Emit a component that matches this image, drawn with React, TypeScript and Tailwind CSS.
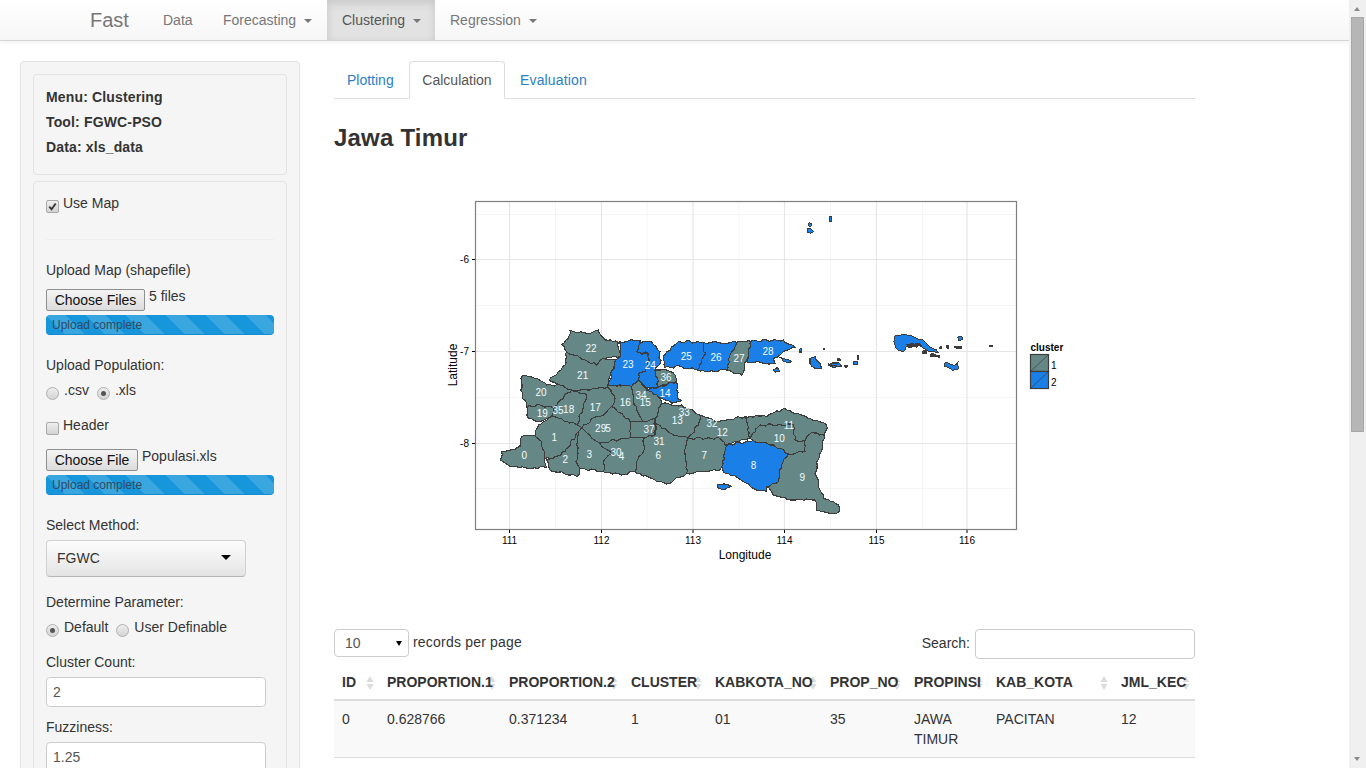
const TEAL = "#658886";
const BLUE = "#1a80e8";
const OUTLINE = "#3c3c3c";

// regions traced from the plot, coordinates are 3x px relative to (490, 310)
const regions: { fill: string; d: string }[] = [
  { fill: TEAL, d: "240,60 262,68 290,70 325,60 345,90 385,97 390,140 340,145 320,165 285,150 230,125 215,103 235,85" },
  { fill: TEAL, d: "230,125 285,150 320,165 340,145 378,150 355,220 352,232 300,240 245,240 210,225 178,210 205,185 225,165" },
  { fill: TEAL, d: "97,198 135,205 170,225 210,225 245,240 205,275 190,295 150,285 110,290 92,240" },
  { fill: TEAL, d: "110,290 150,285 190,295 185,320 150,335 115,325" },
  { fill: TEAL, d: "190,295 205,275 245,240 290,255 280,290 262,345 185,320" },
  { fill: TEAL, d: "245,240 300,240 352,232 375,265 365,290 340,315 320,320 275,352 262,345 280,290 290,255" },
  { fill: TEAL, d: "352,228 425,225 430,265 440,300 458,335 420,335 395,310 365,290 375,265" },
  { fill: TEAL, d: "425,230 445,210 470,240 505,260 515,280 495,325 458,335 440,300 430,265" },
  { fill: TEAL, d: "515,280 545,285 575,285 630,315 625,345 595,385 550,375 495,340 495,325" },
  { fill: TEAL, d: "630,315 680,335 710,330 765,320 780,385 705,405 690,385 595,385 625,345" },
  { fill: TEAL, d: "765,320 830,320 885,295 915,310 1010,345 1005,378 965,368 945,392 915,390 910,345 810,345 780,385" },
  { fill: TEAL, d: "810,345 910,345 915,390 945,392 945,425 895,432 850,405 790,392 780,385" },
  { fill: TEAL, d: "965,368 1005,378 990,430 975,490 985,520 1000,565 1045,585 1048,605 1020,612 980,600 975,570 900,570 850,555 830,530 865,515 875,465 895,432 945,425 945,392" },
  { fill: BLUE, d: "790,392 850,405 895,432 875,465 865,515 830,530 830,545 790,535 745,505 700,485 695,470 712,405" },
  { fill: TEAL, d: "595,385 690,385 705,405 712,405 695,470 690,480 640,485 590,490 585,430" },
  { fill: TEAL, d: "495,340 550,375 595,385 585,430 590,490 530,522 500,515 435,485 440,455 460,425 462,385 495,375" },
  { fill: TEAL, d: "420,335 458,335 495,325 495,375 462,385 420,382" },
  { fill: TEAL, d: "340,315 365,290 395,310 420,335 420,382 330,400 305,385 275,352 320,320" },
  { fill: TEAL, d: "330,400 420,382 462,385 460,425 440,455 435,485 395,495 340,485 342,450 365,432" },
  { fill: TEAL, d: "265,365 275,352 305,385 330,400 365,432 342,450 340,485 270,475 258,455 262,438" },
  { fill: TEAL, d: "265,365 262,438 258,455 270,475 262,500 240,495 180,480 170,450 190,445 225,425" },
  { fill: TEAL, d: "145,345 185,320 262,345 275,352 265,365 225,425 190,445 165,445 155,395 135,378" },
  { fill: TEAL, d: "95,380 135,378 155,395 165,445 170,472 115,475 60,470 32,450 35,425 75,420 90,410" },
  { fill: BLUE, d: "388,95 450,90 450,105 440,125 475,135 478,150 465,185 445,190 445,210 425,230 355,225 378,150 390,140" },
  { fill: BLUE, d: "450,100 485,95 510,125 510,160 495,180 505,230 470,235 445,210 445,190 465,185 478,150 475,130 440,125" },
  { fill: TEAL, d: "495,180 530,180 555,195 560,215 505,230" },
  { fill: BLUE, d: "470,240 505,232 560,215 562,265 575,272 545,280 505,260" },
  { fill: BLUE, d: "565,95 640,97 640,125 648,130 622,180 575,170 525,172 520,140" },
  { fill: BLUE, d: "640,97 740,97 725,125 710,180 655,185 622,180 648,130 640,125" },
  { fill: TEAL, d: "740,97 785,95 775,135 755,195 710,180 725,125" },
  { fill: BLUE, d: "785,93 880,90 915,113 875,130 850,145 855,160 770,155 775,135" },
  { fill: BLUE, d: "682,525 705,522 725,530 705,538 685,535" },
  { fill: BLUE, d: "960,145 975,140 990,160 995,175 975,175 960,160" },
  { fill: BLUE, d: "870,142 885,147 905,155 880,155" },
  { fill: BLUE, d: "1015,165 1040,158 1055,168 1035,172" },
  { fill: BLUE, d: "928,118 935,115 936,126 928,126" },
  { fill: BLUE, d: "850,180 862,172 870,185 855,186" },
];

// specks and islands on the right, 3x px relative to (780, 200)
const islands: { fill: string; d: string }[] = [
  { fill: BLUE, d: "148,50 155,50 155,64 148,64" },
  { fill: BLUE, d: "86,68 93,70 94,79 86,78" },
  { fill: BLUE, d: "82,86 92,85 101,94 92,100 82,96" },
  { fill: BLUE, d: "345,408 365,405 400,410 430,420 445,435 470,450 475,458 440,450 415,435 395,430 378,440 370,455 355,450 345,435 342,425" },
  { fill: OUTLINE, d: "380,432 420,432 425,438 385,442" },
  { fill: BLUE, d: "533,410 545,408 549,418 537,423" },
  { fill: BLUE, d: "492,490 510,492 528,495 536,482 535,508 518,512 495,500" },
  { fill: OUTLINE, d: "452,462 478,466 480,473 452,470" },
  { fill: OUTLINE, d: "500,436 506,436 506,445 500,445" },
  { fill: OUTLINE, d: "525,438 545,440 545,444 525,443" },
  { fill: OUTLINE, d: "628,436 638,436 638,440 628,440" },
  { fill: OUTLINE, d: "428,452 440,452 440,461 428,461" },
  { fill: OUTLINE, d: "480,440 486,440 486,446 480,446" },
  { fill: OUTLINE, d: "130,445 135,445 135,450 130,450" },
  { fill: OUTLINE, d: "172,475 182,478 180,482 172,480" },
  { fill: OUTLINE, d: "195,496 202,496 202,502 195,502" },
  { fill: OUTLINE, d: "232,468 237,468 237,478 232,478" },
  { fill: BLUE, d: "218,485 232,483 232,494 222,494" },
  { fill: BLUE, d: "145,492 178,488 185,500 150,498" },
];

const labels: [string, number, number][] = [
  ["0", 103, 437], ["1", 193, 383], ["2", 226, 450], ["3", 298, 433], ["4", 395, 440],
  ["30", 378, 427], ["29", 332, 357], ["5", 354, 357], ["6", 505, 437], ["7", 643, 436],
  ["8", 791, 467], ["9", 937, 503], ["10", 868, 386], ["11", 897, 347], ["12", 697, 367],
  ["13", 562, 332], ["33", 583, 307], ["32", 666, 340], ["31", 507, 394], ["37", 477, 358],
  ["14", 525, 250], ["15", 466, 278], ["34", 453, 256], ["16", 406, 278], ["17", 316, 292],
  ["18", 236, 298], ["35", 204, 302], ["19", 157, 311], ["20", 153, 248], ["21", 278, 197],
  ["22", 303, 116], ["23", 414, 164], ["24", 481, 166], ["36", 528, 203], ["25", 589, 140],
  ["26", 678, 143], ["27", 747, 146], ["28", 834, 124],
];

// breaks every edge into short wobbly steps, same result from both sides of a shared border
function roughen(d: string) {
  const pts = d.split(" ").map((p) => p.split(",").map(Number));
  const out: string[] = [];
  pts.forEach((a, i) => {
    const b = pts[(i + 1) % pts.length];
    const flip = a[0] > b[0] || (a[0] === b[0] && a[1] > b[1]);
    const [p, q] = flip ? [b, a] : [a, b];
    const len = Math.hypot(q[0] - p[0], q[1] - p[1]);
    const n = Math.max(1, Math.floor(len / 8));
    const step: string[] = [];
    for (let k = 0; k < n; k++) {
      const t = k / n;
      const w = k === 0 ? 0 : (((p[0] * 7 + p[1] * 13 + q[0] * 3 + k * 31) * (k + 3)) % 7) - 3;
      const x = p[0] + (q[0] - p[0]) * t - ((q[1] - p[1]) / len) * w;
      const y = p[1] + (q[1] - p[1]) * t + ((q[0] - p[0]) / len) * w;
      step.push(`${x.toFixed(1)},${y.toFixed(1)}`);
    }
    if (flip) {
      step.push(`${q[0]},${q[1]}`);
      step.reverse();
      step.pop();
    }
    out.push(...step);
  });
  return out.join(" ");
}

function MapPlot() {
  const majorX = [509.5, 601.5, 693, 784.5, 876.5, 967];
  const minorX = [555.5, 647, 739, 830.5, 922.5];
  const majorY = [259.5, 351.5, 443.5];
  const minorY = [214.5, 305.5, 397.5, 488.5];
  return (
    <svg viewBox="440 190 630 380" className="block w-[630px] h-[380px] ml-[106px] mt-[37px]">
      <g stroke="#f5f5f5" strokeWidth="1">
        {minorX.map((x) => <line key={x} x1={x} x2={x} y1="202" y2="529" />)}
        {minorY.map((y) => <line key={y} y1={y} y2={y} x1="476" x2="1016" />)}
      </g>
      <g stroke="#e6e6e6" strokeWidth="1.2">
        {majorX.map((x) => <line key={x} x1={x} x2={x} y1="202" y2="529" />)}
        {majorY.map((y) => <line key={y} y1={y} y2={y} x1="476" x2="1016" />)}
      </g>
      <g transform="translate(490 310) scale(0.3333)">
        {regions.map((r, i) => (
          <polygon key={i} points={roughen(r.d)} fill={r.fill} stroke={OUTLINE} strokeWidth="3.4" strokeLinejoin="round" shapeRendering="crispEdges" />
        ))}
        {labels.map(([t, x, y]) => (
          <text key={t} x={x} y={y + 10} fill="#f4fbff" fontSize="30" textAnchor="middle" fontFamily="'Liberation Sans', sans-serif">{t}</text>
        ))}
      </g>
      <g transform="translate(780 200) scale(0.3333)">
        {islands.map((r, i) => (
          <polygon key={i} points={roughen(r.d)} fill={r.fill} stroke={OUTLINE} strokeWidth="3" shapeRendering="crispEdges" />
        ))}
      </g>
      <rect x="475.5" y="201.5" width="541" height="328" fill="none" stroke="#7f7f7f" strokeWidth="1.2" />
      <g stroke="#000" strokeWidth="1">
        {majorX.map((x) => <line key={x} x1={x} x2={x} y1="530" y2="533" />)}
        {majorY.map((y) => <line key={y} y1={y} y2={y} x1="472" x2="475" />)}
      </g>
      <g fontFamily="'Liberation Sans', sans-serif" fontSize="10" fill="#000">
        {majorX.map((x, i) => <text key={x} x={x} y="544" textAnchor="middle">{111 + i}</text>)}
        {majorY.map((y, i) => <text key={y} x="469" y={y + 3.5} textAnchor="end">{-6 - i}</text>)}
        <text x="745" y="559" fontSize="12" textAnchor="middle">Longitude</text>
        <text x="457" y="365" fontSize="12" textAnchor="middle" transform="rotate(-90 457 365)">Latitude</text>
        <text x="1030.5" y="351" fontWeight="bold">cluster</text>
        <text x="1051" y="368.5">1</text>
        <text x="1051" y="385.5">2</text>
      </g>
      <g stroke={OUTLINE} strokeWidth="1.2">
        <rect x="1030.5" y="354.5" width="18" height="17" fill={TEAL} />
        <rect x="1030.5" y="371.5" width="18" height="17" fill={BLUE} />
        <line x1="1030.5" y1="371.5" x2="1048.5" y2="354.5" strokeWidth="0.7" />
        <line x1="1030.5" y1="388.5" x2="1048.5" y2="371.5" strokeWidth="0.7" />
      </g>
    </svg>
  );
}

const Caret = () => (
  <span className="inline-block ml-[4px] align-middle w-0 h-0 border-x-[4px] border-x-transparent border-t-[4px] border-t-[#777]" />
);

const Checkbox = ({ checked }: { checked?: boolean }) => (
  <span className="relative top-[7px] inline-flex items-center justify-center w-[13px] h-[13px] rounded-[2px] border border-[#a8a8a8] bg-linear-to-b from-[#eeeeee] to-[#d4d4d4] shrink-0">
    {checked && (
      <svg viewBox="0 0 12 12" className="w-[11px] h-[11px]">
        <path d="M2.5 6.2 L5 9 L9.5 2.8" fill="none" stroke="#333" strokeWidth="2" />
      </svg>
    )}
  </span>
);

const Radio = ({ checked }: { checked?: boolean }) => (
  <span className="relative top-[7px] inline-flex items-center justify-center w-[13px] h-[13px] rounded-full border border-[#b0b0b0] bg-linear-to-b from-[#eeeeee] to-[#d4d4d4] shrink-0">
    {checked && <span className="w-[5px] h-[5px] rounded-full bg-[#555]" />}
  </span>
);

const Progress = () => (
  <div className="mt-[4px] h-[20px] w-[228px] rounded-[4px] bg-[#1796db] bg-[linear-gradient(45deg,rgba(255,255,255,.15)_25%,transparent_25%,transparent_50%,rgba(255,255,255,.15)_50%,rgba(255,255,255,.15)_75%,transparent_75%,transparent)] bg-[length:40px_40px] border-b border-[#128ccf] pl-[6px] text-[12px] leading-[20px] text-[#2d4a5e]">
    Upload complete
  </div>
);

const FileButton = ({ label, width }: { label: string; width: string }) => (
  <button className={`${width} h-[22px] rounded-[2px] border border-[#8f8f8f] bg-linear-to-b from-[#f4f4f4] to-[#dddddd] text-[14px] leading-[20px] text-[#111] text-center`}>
    {label}
  </button>
);

const columns = [
  { name: "ID", width: "w-[45px]", value: "0" },
  { name: "PROPORTION.1", width: "w-[122px]", value: "0.628766" },
  { name: "PROPORTION.2", width: "w-[122px]", value: "0.371234" },
  { name: "CLUSTER", width: "w-[84px]", value: "1" },
  { name: "KABKOTA_NO", width: "w-[115px]", value: "01" },
  { name: "PROP_NO", width: "w-[84px]", value: "35" },
  { name: "PROPINSI", width: "w-[82px]", value: "JAWA TIMUR" },
  { name: "KAB_KOTA", width: "w-[125px]", value: "PACITAN" },
  { name: "JML_KEC", width: "w-[82px]", value: "12" },
];

const SortIcon = () => (
  <svg viewBox="0 0 8 16" className="absolute right-[5px] top-[11px] w-[8px] h-[16px]">
    <path d="M4 1 L7.5 7 L0.5 7 Z M4 15 L7.5 9 L0.5 9 Z" fill="#dcdcdc" />
  </svg>
);

function Sidebar() {
  return (
    <aside className="w-[280px] shrink-0 h-[760px] rounded-[4px] border border-[#e3e3e3] bg-[#f5f5f5] px-[12px] pt-[12px]">
      <div className="rounded-[4px] border border-[#e3e3e3] p-[12px] h-[101px] font-bold tracking-[0.15px]">
        <p className="mb-[5px]">Menu: Clustering</p>
        <p className="mb-[5px]">Tool: FGWC-PSO</p>
        <p>Data: xls_data</p>
      </div>
      <div className="mt-[6px] rounded-[4px] border border-[#e3e3e3] p-[12px] h-[640px]">
        <div className="-mt-[1px] flex gap-[4px]"><Checkbox checked /><span>Use Map</span></div>
        <hr className="mt-[26px] border-t border-[#eeeeee]" />
        <div className="mt-[20px]">Upload Map (shapefile)</div>
        <div className="mt-[9px] flex gap-[4px]">
          <FileButton label="Choose Files" width="w-[99px]" />
          <span className="-mt-[3px]">5 files</span>
        </div>
        <Progress />
        <div className="mt-[20px]">Upload Population:</div>
        <div className="mt-[5px] flex">
          <Radio /><span className="ml-[5px]">.csv</span>
          <span className="w-[8px]" />
          <Radio checked /><span className="ml-[5px]">.xls</span>
        </div>
        <div className="mt-[15px] flex gap-[4px]"><Checkbox /><span>Header</span></div>
        <div className="mt-[14px] flex gap-[4px]">
          <FileButton label="Choose File" width="w-[92px]" />
          <span className="-mt-[3px]">Populasi.xls</span>
        </div>
        <Progress />
        <div className="mt-[20px]">Select Method:</div>
        <div className="mt-[5px] flex items-center justify-between w-[200px] h-[37px] rounded-[4px] border border-[#d0d0d0] border-b-[#b5b5b5] bg-linear-to-b from-[#fdfdfd] to-[#e4e4e4] pl-[10px] pr-[14px] pb-[2px]">
          <span>FGWC</span>
          <span className="w-0 h-0 border-x-[5px] border-x-transparent border-t-[5px] border-t-black" />
        </div>
        <div className="mt-[15px]">Determine Parameter:</div>
        <div className="mt-[5px] flex">
          <Radio checked /><span className="ml-[5px]">Default</span>
          <span className="w-[8px]" />
          <Radio /><span className="ml-[5px]">User Definable</span>
        </div>
        <div className="mt-[15px]">Cluster Count:</div>
        <div className="mt-[5px] w-[220px] h-[30px] rounded-[4px] border border-[#cccccc] bg-white px-[6px] leading-[28px] text-[#555]">2</div>
        <div className="mt-[10px]">Fuzziness:</div>
        <div className="mt-[5px] w-[220px] h-[30px] rounded-[4px] border border-[#cccccc] bg-white px-[6px] leading-[28px] text-[#555]">1.25</div>
      </div>
    </aside>
  );
}

export default function App() {
  return (
    <div className="flex h-screen overflow-hidden bg-white font-['Liberation_Sans',Arial,sans-serif] text-[14px] leading-[20px] text-[#333]">
      <div className="flex-1 min-w-0 overflow-hidden">
        <nav className="flex h-[41px] border-b border-[#d5d5d5] bg-linear-to-b from-white to-[#f6f6f6] pl-[75px] text-[#777] whitespace-nowrap shadow-[0_1px_5px_rgba(0,0,0,0.07)]">
          <a className="w-[73px] pl-[15px] text-[20px] leading-[40px]">Fast</a>
          <a className="w-[60px] pl-[15px] leading-[40px]">Data</a>
          <a className="w-[119px] pl-[15px] leading-[40px]">Forecasting <Caret /></a>
          <a className="w-[108px] pl-[15px] leading-[40px] text-[#555] bg-[#e2e2e2] shadow-[inset_0_3px_9px_rgba(0,0,0,0.12)]">Clustering <Caret /></a>
          <a className="pl-[15px] leading-[40px]">Regression <Caret /></a>
        </nav>

        <div className="flex pl-[20px] pt-[20px]">
          <Sidebar />
          <main className="ml-[34px] w-[861px] shrink-0">
            <ul className="flex h-[38px] border-b border-[#dddddd]">
              <li className="mr-[2px] w-[73px] pl-[13px] leading-[38px] text-[#2a80c8]">Plotting</li>
              <li className="mr-[2px] h-[38px] w-[96px] text-center leading-[36px] text-[#555] bg-white border border-[#dddddd] border-b-white rounded-t-[4px]">Calculation</li>
              <li className="pl-[13px] leading-[38px] tracking-[0.15px] text-[#2a80c8]">Evaluation</li>
            </ul>
            <h1 className="mt-[24px] text-[24px] leading-[30px] font-bold tracking-[0.2px] text-[#333]">Jawa Timur</h1>
            <MapPlot />

            <div className="mt-[59px] flex items-start justify-between">
              <div className="flex">
                <div className="flex items-center justify-between w-[75px] h-[28px] rounded-[4px] border border-[#cccccc] pl-[10px] pr-[6px] text-[#555]">
                  <span>10</span>
                  <span className="w-0 h-0 border-x-[3.5px] border-x-transparent border-t-[5px] border-t-black" />
                </div>
                <span className="ml-[4px] mt-[3px] tracking-[0.2px]">records per page</span>
              </div>
              <div className="flex">
                <span className="mt-[4px]">Search:</span>
                <div className="ml-[5px] w-[220px] h-[30px] rounded-[4px] border border-[#cccccc] bg-white" />
              </div>
            </div>

            <table className="mt-[5px] w-[861px] table-fixed border-collapse">
              <thead>
                <tr className="h-[36px] border-b-2 border-[#dddddd]">
                  {columns.map((c) => (
                    <th key={c.name} className={`${c.width} relative px-[8px] py-0 text-left font-bold whitespace-nowrap`}>
                      <SortIcon />
                      <span className="relative">{c.name}</span>
                    </th>
                  ))}
                </tr>
              </thead>
              <tbody>
                <tr className="h-[56px] bg-[#f9f9f9] border-b border-[#dddddd]">
                  {columns.map((c) => (
                    <td key={c.name} className="p-[8px] align-top">{c.value}</td>
                  ))}
                </tr>
              </tbody>
            </table>
          </main>
        </div>
      </div>

      {/* window scrollbar */}
      <div className="relative w-[17px] shrink-0 bg-[#f0f0f0]">
        <span className="absolute left-[5px] top-[7px] w-0 h-0 border-x-[3.5px] border-x-transparent border-b-[4px] border-b-[#8a8a8a]" />
        <div className="absolute left-[2px] top-[17px] w-[13px] h-[415px] bg-[#b6b6b6] border border-[#a8a8a8]" />
        <span className="absolute left-[5px] bottom-[7px] w-0 h-0 border-x-[3.5px] border-x-transparent border-t-[4px] border-t-[#8a8a8a]" />
      </div>
    </div>
  );
}
